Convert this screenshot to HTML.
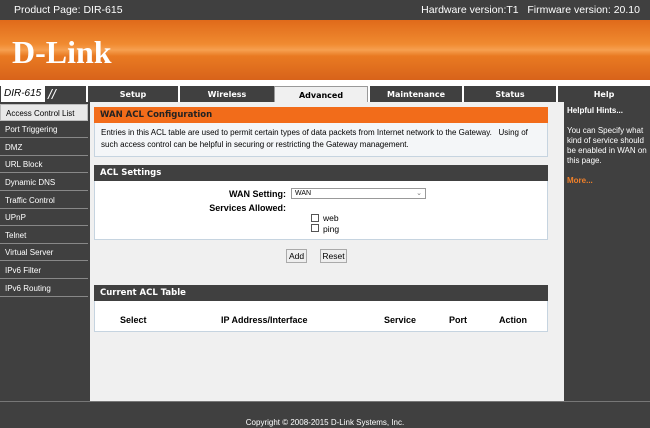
<!DOCTYPE html>
<html><head><style>
*{margin:0;padding:0;box-sizing:border-box}
body{width:650px;height:428px;overflow:hidden;background:#404040;font-family:"Liberation Sans",sans-serif;font-size:8px;color:#000;position:relative}
.a{position:absolute}
.b{font-family:"DejaVu Sans",sans-serif;font-weight:bold}
.top{left:0;top:0;width:650px;height:20px;background:#404040;color:#fff;font-family:"Liberation Sans",sans-serif;font-size:10.5px;line-height:20px}
.banner{left:0;top:20px;width:650px;height:60px;background:linear-gradient(180deg,#e06a1a 0%,#f08a30 40%,#f6a050 50%,#e97a22 60%,#d8631a 100%)}
.logo{left:12px;top:34px;color:#fff;font-family:"Liberation Serif",serif;font-weight:bold;font-size:32px}
.strip{left:0;top:80px;width:650px;height:6px;background:#fff}
.tab{top:86px;height:16px;background:#404040;color:#fff;font-size:8px;text-align:center;line-height:17px;border-left:2px solid #fff}
.side{left:0;width:88px;height:17px;background:#404040;color:#fff;font-size:8px;padding-left:5px;line-height:17px;border-bottom:1px solid #888}
.main{left:90px;top:102px;width:474px;height:299px;background:#f0f0f0}
.hdr{left:94px;width:454px;height:16px;background:#404040;color:#fff;font-size:8.5px;line-height:16px;padding-left:6px}
.box{left:94px;width:454px;background:#fff;border:1px solid #c6d4e0;border-top:none}
.right{left:566px;top:102px;width:84px;height:299px;background:#404040;color:#fff;font-size:8px;padding:4px 2px 0 1px;line-height:10px}
.btn{height:14px;background:#eee;border:1px solid #aaa;font-size:8.5px;text-align:center;line-height:12px}
.cb{width:8px;height:8px;border:1px solid #555;background:#fff}
.lbl{font-family:"Liberation Sans",sans-serif;font-weight:bold;font-size:9px}
</style></head><body>
<div class="a top"><span style="position:absolute;left:14px">Product Page: DIR-615</span><span style="position:absolute;right:10px">Hardware version:T1&nbsp;&nbsp; Firmware version: 20.10</span></div>
<div class="a banner"></div>
<div class="a logo">D-Link</div>
<div class="a strip"></div>
<div class="a" style="left:0;top:86px;width:88px;height:16px;background:#404040"></div>
<div class="a" style="left:1px;top:86px;width:44px;height:16px;background:#fff;color:#000;font-style:italic;font-size:10px;line-height:16px;padding-left:3px">DIR-615</div>
<div class="a" style="left:48px;top:86px;width:14px;height:16px;color:#fff;font-size:14px;line-height:16px;font-style:italic">//</div>
<div class="a tab b" style="left:86px;width:92px">Setup</div>
<div class="a tab b" style="left:178px;width:96px">Wireless</div>
<div class="a tab b" style="left:274px;width:94px;background:#f0f0f0;color:#000;border:1px solid #999;border-bottom:none;height:17px">Advanced</div>
<div class="a tab b" style="left:368px;width:94px">Maintenance</div>
<div class="a tab b" style="left:462px;width:94px">Status</div>
<div class="a tab b" style="left:556px;width:94px">Help</div>
<div class="a" style="left:0;top:102px;width:90px;height:299px;background:#404040"></div>
<div class="a side" style="top:104px;background:#e8e8e8;color:#000;border:1px solid #bbb">Access Control List</div>
<div class="a side" style="top:121px">Port Triggering</div>
<div class="a side" style="top:139px">DMZ</div>
<div class="a side" style="top:156px">URL Block</div>
<div class="a side" style="top:174px">Dynamic DNS</div>
<div class="a side" style="top:192px">Traffic Control</div>
<div class="a side" style="top:209px">UPnP</div>
<div class="a side" style="top:227px">Telnet</div>
<div class="a side" style="top:244px">Virtual Server</div>
<div class="a side" style="top:262px">IPv6 Filter</div>
<div class="a side" style="top:280px">IPv6 Routing</div>
<div class="a main"></div>
<div class="a hdr b" style="top:107px;background:#f26c1a;color:#222">WAN ACL Configuration</div>
<div class="a box" style="top:123px;height:34px;padding:4px 6px;font-size:8px;line-height:12px;background:#f4f6f8">Entries in this ACL table are used to permit certain types of data packets from Internet network to the Gateway.&nbsp;&nbsp; Using of such access control can be helpful in securing or restricting the Gateway management.</div>
<div class="a hdr b" style="top:165px">ACL Settings</div>
<div class="a box" style="top:181px;height:59px"></div>
<div class="a lbl" style="left:190px;top:189px;width:96px;text-align:right">WAN Setting:</div>
<div class="a" style="left:291px;top:188px;width:135px;height:11px;border:1px solid #999;background:#fff;font-size:7px;line-height:9px;padding-left:3px">WAN<span style="position:absolute;right:3px;color:#777">⌄</span></div>
<div class="a lbl" style="left:180px;top:203px;width:106px;text-align:right">Services Allowed:</div>
<div class="a cb" style="left:311px;top:214px"></div><div class="a" style="left:323px;top:213px;font-size:8.5px">web</div>
<div class="a cb" style="left:311px;top:224px"></div><div class="a" style="left:323px;top:224px;font-size:8.5px">ping</div>
<div class="a btn" style="left:286px;top:249px;width:21px">Add</div>
<div class="a btn" style="left:320px;top:249px;width:27px">Reset</div>
<div class="a hdr b" style="top:285px">Current ACL Table</div>
<div class="a box" style="top:301px;height:31px"></div>
<div class="a lbl" style="top:315px;left:120px">Select</div>
<div class="a lbl" style="top:315px;left:221px">IP Address/Interface</div>
<div class="a lbl" style="top:315px;left:384px">Service</div>
<div class="a lbl" style="top:315px;left:449px">Port</div>
<div class="a lbl" style="top:315px;left:499px">Action</div>
<div class="a right"><b>Helpful Hints...</b><br><br>You can Specify what kind of service should be enabled in WAN on this page.<br><br><b style="color:#f0802a">More...</b></div>
<div class="a" style="left:0;top:401px;width:650px;height:27px;background:#404040;border-top:1px solid #777;color:#fff;font-size:8px;text-align:center;padding-top:16px">Copyright © 2008-2015 D-Link Systems, Inc.</div>
</body></html>
